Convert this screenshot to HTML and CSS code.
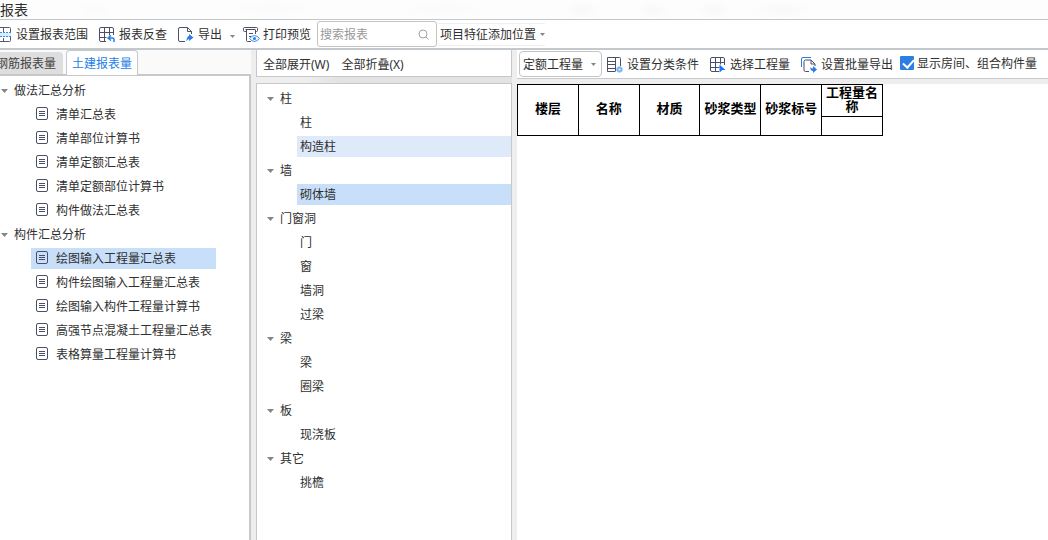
FILE: index.html
```html
<!DOCTYPE html>
<html lang="zh-CN">
<head>
<meta charset="utf-8">
<title>报表</title>
<link rel="stylesheet" href="styles.css">
</head>
<body>
<svg class="defs" aria-hidden="true">
  <symbol id="doc" viewBox="0 0 12 14"><rect x=".5" y=".5" width="11" height="12" rx="1.5" fill="none" stroke="#4b5068"/><path d="M3 4.5h6M3 6.5h6M3 8.5h6" stroke="#4b5068"/></symbol>
  <symbol id="caret" viewBox="0 0 7 4"><path d="M0 0h7L3.500 4z" fill="#858585"/></symbol>
</svg>
<div class="window">
  <header class="title">报表</header>
  <div class="toolbar">
    <button class="tool range"><svg width="12" height="16" viewBox="0 0 12 16" fill="none"><path d="M0 6h11v4H0z" fill="#d9ebff"/><path d="M0 .5h9.500q1 0 1 1v4M0 14.500h9.500q1 0 1-1V10M3.500 1v4M3.500 11v3" stroke="#555a70"/><path d="M0 5.500h11M0 9.500h11" stroke="#3b8bea" stroke-dasharray="2 1"/></svg><span>设置报表范围</span></button>
    <button class="tool check"><svg width="16" height="16" viewBox="0 0 16 16" fill="none"><path d="M7 14.500H2Q.5 14.500.5 13V2Q.5.5 2 .5h11q1.500 0 1.500 1.500v6M.5 5.500h14M.5 10.500h7M5.500 .5v14M10.500 .5v8" stroke="#4b5068"/><path d="M12 8.500l-3 2.500 3 2.500M9 11h4.500q1.500 0 1.500 1.500V15" stroke="#2b7de5" stroke-width="1.500"/></svg><span>报表反查</span></button>
    <button class="tool export"><svg width="16" height="16" viewBox="0 0 16 16" fill="none"><path d="M7 14.500H2Q.5 14.500.5 13V2Q.5.5 2 .5h7.500l4 4V7M9.500.5v4h4" stroke="#4b5068"/><path d="M11 7l4.500 3.500L11 14v-2q-1.500 0-2.500 2.500Q8.500 9.500 11 9z" fill="#2b7de5"/></svg><span>导出</span><svg class="drop" width="5" height="3"><use href="#caret"/></svg></button>
    <button class="tool print"><svg width="17" height="16" viewBox="0 0 17 16" fill="none"><path d="M3 4.500H1.500Q.5 4.500.5 3.500v-2Q.5.5 1.500.5h12q1 0 1 1v2q0 1-1 1H12M2.500 2.500h10M3.500 3v10.500q0 1 1 1H8M12.500 3v4M6 6.500h4M6 9.500h2" stroke="#4b5068"/><path d="M6.500 11.500q5-6 10 0q-5 6-10 0z" fill="#eaf4ff" stroke="#4a93ea"/><circle cx="11.500" cy="11.500" r="1.500" fill="#2b7de5"/></svg><span>打印预览</span></button>
    <label class="search"><input type="text" placeholder="搜索报表" aria-label="搜索报表"><svg width="11" height="11" viewBox="0 0 11 11" fill="none" stroke="#a3a3a3"><circle cx="5" cy="5" r="4"/><path d="M8 8l2.500 2.500"/></svg></label>
    <button class="tool feature"><span>项目特征添加位置</span><svg class="drop" width="5" height="3"><use href="#caret"/></svg></button>
  </div>
  <main class="body">
    <aside class="reports">
      <div class="tabs"><button class="tab"><span>钢筋报表量</span></button><button class="tab on">土建报表量</button></div>
      <nav class="tree">
        <div class="group"><svg width="7" height="4"><use href="#caret"/></svg>做法汇总分析</div>
        <div class="leaf"><svg width="12" height="14"><use href="#doc"/></svg>清单汇总表</div>
        <div class="leaf"><svg width="12" height="14"><use href="#doc"/></svg>清单部位计算书</div>
        <div class="leaf"><svg width="12" height="14"><use href="#doc"/></svg>清单定额汇总表</div>
        <div class="leaf"><svg width="12" height="14"><use href="#doc"/></svg>清单定额部位计算书</div>
        <div class="leaf"><svg width="12" height="14"><use href="#doc"/></svg>构件做法汇总表</div>
        <div class="group"><svg width="7" height="4"><use href="#caret"/></svg>构件汇总分析</div>
        <div class="leaf selected"><svg width="12" height="14"><use href="#doc"/></svg>绘图输入工程量汇总表</div>
        <div class="leaf"><svg width="12" height="14"><use href="#doc"/></svg>构件绘图输入工程量汇总表</div>
        <div class="leaf"><svg width="12" height="14"><use href="#doc"/></svg>绘图输入构件工程量计算书</div>
        <div class="leaf"><svg width="12" height="14"><use href="#doc"/></svg>高强节点混凝土工程量汇总表</div>
        <div class="leaf"><svg width="12" height="14"><use href="#doc"/></svg>表格算量工程量计算书</div>
      </nav>
    </aside>
    <section class="components">
      <div class="fold"><button>全部展开(W)</button><button>全部折叠(X)</button></div>
      <nav class="tree">
        <div class="group"><svg width="7" height="4"><use href="#caret"/></svg>柱</div>
        <div class="leaf">柱</div>
        <div class="leaf hover">构造柱</div>
        <div class="group"><svg width="7" height="4"><use href="#caret"/></svg>墙</div>
        <div class="leaf selected">砌体墙</div>
        <div class="group"><svg width="7" height="4"><use href="#caret"/></svg>门窗洞</div>
        <div class="leaf">门</div>
        <div class="leaf">窗</div>
        <div class="leaf">墙洞</div>
        <div class="leaf">过梁</div>
        <div class="group"><svg width="7" height="4"><use href="#caret"/></svg>梁</div>
        <div class="leaf">梁</div>
        <div class="leaf">圈梁</div>
        <div class="group"><svg width="7" height="4"><use href="#caret"/></svg>板</div>
        <div class="leaf">现浇板</div>
        <div class="group"><svg width="7" height="4"><use href="#caret"/></svg>其它</div>
        <div class="leaf">挑檐</div>
      </nav>
    </section>
    <section class="report">
      <div class="options">
        <div class="picker"><select aria-label="工程量类型"><option>定额工程量</option></select><svg width="5" height="3"><use href="#caret"/></svg></div>
        <button class="tool classify"><svg width="16" height="16" viewBox="0 0 16 16" fill="none"><path d="M8 14.500H.5V.5h12q1 0 1 1V9M8.500.5v14M.5 4.500h8M.5 7.500h8M.5 11.500h8" stroke="#4b5068"/><circle cx="12.500" cy="12.500" r="3" fill="#7db8f7"/><circle cx="12.500" cy="12.500" r="3" stroke="#9ccaf9" stroke-dasharray="1 1"/><circle cx="12.500" cy="12.500" r="1" fill="#e3f1ff"/></svg><span>设置分类条件</span></button>
        <button class="tool choose"><svg width="16" height="16" viewBox="0 0 16 16" fill="none"><path d="M9 14.500H2Q.5 14.500.5 13V2Q.5.5 2 .5h11q1.500 0 1.500 1.500v6M.5 5.500h14M.5 10.500h9M5.500 .5v14M10.500 .5v7" stroke="#4b5068"/><path d="M9.500 7.500l6 5.500h-3l-3 2.500z" fill="#1677ff"/></svg><span>选择工程量</span></button>
        <button class="tool batch"><svg width="16" height="16" viewBox="0 0 16 16" fill="none"><path d="M.5 10V2Q.5.500 2 .500h8" stroke="#2b7de5"/><path d="M8 14.500H4.500Q3 14.500 3 13V4.500Q3 3 4.500 3H10l4 4v2M10 3v4h4" stroke="#4b5068"/><path d="M9 9q0 2.500 3 2.500V9l4 3.500-4 3.500v-2Q9 14 9 9z" fill="#2b7de5"/></svg><span>设置批量导出</span></button>
        <label class="show"><input type="checkbox" checked><span>显示房间、组合构件量</span></label>
      </div>
      <div class="sheet">
        <table>
          <thead>
            <tr><th rowspan="2">楼层</th><th rowspan="2">名称</th><th rowspan="2">材质</th><th rowspan="2">砂浆类型</th><th rowspan="2">砂浆标号</th><th class="quantity">工程量名称</th></tr>
            <tr><td></td></tr>
          </thead>
        </table>
      </div>
    </section>
  </main>
</div>
</body>
</html>
```

FILE: styles.css
```css
* { box-sizing: border-box; }
body {
  margin: 0;
  color: #2f2f2f;
  font: 12px/20px "Noto Sans", "Noto Sans CJK SC", sans-serif;
}
button, input, select { font: inherit; color: inherit; }
button { padding: 0; border: 0; background: none; white-space: nowrap; }
svg { flex: none; }
.defs { position: absolute; width: 0; height: 0; }
.window { display: flex; flex-direction: column; min-height: 100vh; background: #fff; }

.title {
  height: 20px;
  border-bottom: 1px solid #c3c7ca;
  font-size: 14px;
  background:
    radial-gradient(ellipse 18px 9px at 95px 10px, #fafafa, transparent),
    radial-gradient(ellipse 42px 9px at 272px 9px, #fafafa, transparent),
    radial-gradient(ellipse 42px 9px at 445px 9px, #fafafa, transparent),
    radial-gradient(ellipse 18px 9px at 582px 10px, #f8f8f8, transparent),
    radial-gradient(ellipse 18px 9px at 653px 10px, #f8f8f8, transparent),
    radial-gradient(ellipse 18px 9px at 714px 10px, #f8f8f8, transparent),
    radial-gradient(ellipse 32px 9px at 782px 10px, #f8f8f8, transparent),
    #fdfdfd;
}

.toolbar {
  display: flex;
  align-items: center;
  height: 30px;
  border-bottom: 2px solid #c3c8cc;
}
.tool { display: flex; align-items: center; gap: 4px; flex: none; padding-top: 2px; }
.check { margin-left: 11px; }
.export { margin-left: 11px; }
.export .drop { margin: 2px 0 0 4px; }
.print { margin-left: 8px; gap: 3px; }
.search {
  display: flex;
  align-items: center;
  width: 120px;
  height: 26px;
  margin-left: 6px;
  padding: 0 7px 0 2px;
  border: 1px solid #c4c4c4;
  border-radius: 3px;
}
.search input { flex: 1; min-width: 0; padding: 1px 0 0; border: 0; outline: 0; background: none; }
.search input::placeholder { color: #9a9a9a; opacity: 1; }
.feature { margin-left: 1px; padding: 1px 0 0 2px; border: solid #efefef; border-width: 1px 0; }

.body { display: flex; flex: 1; background: #eeeeef; }

.reports {
  display: flex;
  flex-direction: column;
  flex: none;
  width: 251px;
  background: #fff;
}
.tabs {
  display: flex;
  align-items: flex-end;
  gap: 3px;
  height: 26px;
  border-bottom: 2px solid #c8c8c8;
  background: #fafafa;
}
.tab {
  display: flex;
  justify-content: flex-end;
  align-items: center;
  overflow: hidden;
  width: 63px;
  height: 22px;
  padding: 2px 7px 0 0;
  border-radius: 0 4px 0 0;
  background: #dedede;
  color: #444;
}
.tab.on {
  justify-content: center;
  width: 72px;
  height: 25px;
  margin-bottom: -1px;
  padding: 1px 0 0;
  border: 1px solid #c4c8cc;
  border-bottom: 0;
  border-radius: 4px 4px 0 0;
  background: #fff;
  color: #1e80e8;
}

.tree { display: flex; flex-direction: column; gap: 3px; flex: 1; background: #fff; }
.group, .leaf { display: flex; align-items: center; height: 21px; }
.selected { background: #c8dffa; }
.hover { background: #dee9f9; }

.reports .tree { padding-top: 4px; border-right: 2px solid #c8c8c8; }
.reports .group { gap: 6px; padding-left: 1px; }
.reports .leaf { gap: 8px; width: 185px; margin-left: 31px; padding-left: 5px; }
.reports .leaf svg { margin-bottom: 1px; }

.components {
  display: flex;
  flex-direction: column;
  flex: none;
  width: 256px;
  margin: 0 5px;
  background: linear-gradient(90deg, #eeeeef 50px, #e2e2e2 85px);
}
.fold {
  display: flex;
  align-items: center;
  gap: 12px;
  height: 27px;
  padding: 3px 6px 0;
  border: 1px solid #c8c8cc;
  border-top: 0;
  background: #fff;
}
.components .tree { margin-top: 6px; padding-top: 4px; border: 1px solid #c8c8c8; border-bottom: 0; }
.components .group { gap: 6px; padding-left: 10px; }
.components .leaf { margin-left: 40px; padding-left: 3px; }

.report { display: flex; flex-direction: column; flex: 1; min-width: 0; }
.options {
  display: flex;
  align-items: center;
  height: 29px;
  padding-left: 2px;
  border-bottom: 1px solid #c8c8cf;
  background: #fff;
}
.picker {
  display: flex;
  align-items: center;
  justify-content: space-between;
  width: 83px;
  height: 26px;
  padding: 0 5px 0 3px;
  border: 1px solid #c4c4c4;
  border-radius: 4px;
}
.picker select { width: 64px; padding: 2px 0 0; border: 0; background: none; appearance: none; }
.classify { margin-left: 5px; }
.choose { margin-left: 11px; }
.batch { margin-left: 11px; }
.show { display: flex; align-items: center; gap: 3px; margin-left: 7px; white-space: nowrap; }
.show input {
  appearance: none;
  width: 14px;
  height: 14px;
  margin: 0 0 2px;
  border-radius: 1px;
  background: #2b7fe3;
}
.show input::before {
  content: "";
  display: block;
  width: 5px;
  height: 9px;
  margin: 1px 5px;
  border: solid #fff;
  border-width: 0 2px 2px 0;
  transform: rotate(42deg);
}

.sheet { flex: 1; margin-top: 5px; background: #fff; }
table { width: 366px; table-layout: fixed; border-collapse: collapse; color: #000; }
th, td { height: 19px; padding: 0; border: 1px solid #000; }
th { padding-bottom: 4px; font-size: 13px; line-height: 14px; font-weight: 700; }
.quantity { height: 32px; padding-bottom: 3px; }
```
